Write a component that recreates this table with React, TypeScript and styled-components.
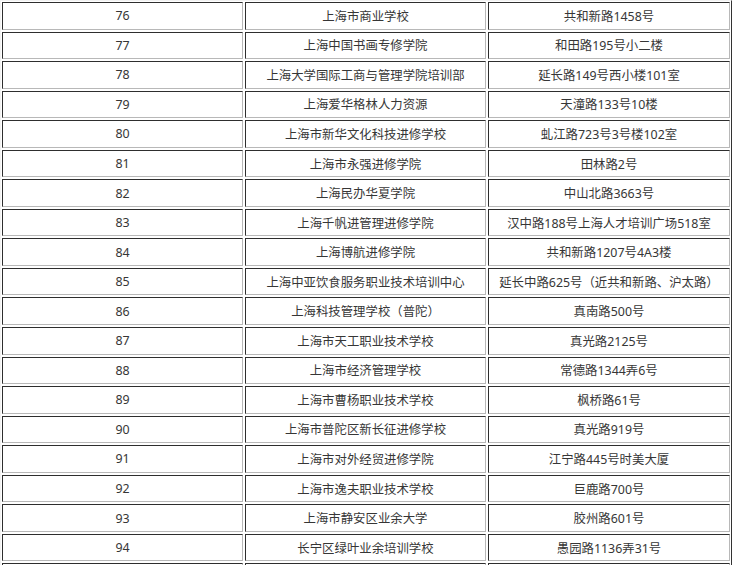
import React from "react";
import styled, { createGlobalStyle } from "styled-components";

const Global = createGlobalStyle`
  html, body { margin: 0; padding: 0; background: #fff; }
  body { font-family: "Noto Sans", "Noto Sans CJK SC", sans-serif; }
`;

const Table = styled.div`
  display: grid;
  grid-template-columns: 241px 241px 242px;
  grid-auto-rows: 27.56px;
  gap: 2px;
  padding: 1px;
  width: max-content;
  border-style: solid;
  border-width: 1px;
  border-color: #f2f2f2 #333 #333 #f2f2f2;
  background: #fff;
`;

const Cell = styled.div`
  box-sizing: border-box;
  display: flex;
  align-items: center;
  justify-content: center;
  border-style: solid;
  border-width: 1px;
  border-color: #2e2e2e #b8b8b8 #b8b8b8 #2e2e2e;
  font-family: "Noto Sans", "Noto Sans CJK SC", sans-serif;
  font-size: 12.4px;
  color: #363636;
  white-space: nowrap;
  overflow: hidden;
`;

const rows: [string, string, string][] = [
  ["76", "上海市商业学校", "共和新路1458号"],
  ["77", "上海中国书画专修学院", "和田路195号小二楼"],
  ["78", "上海大学国际工商与管理学院培训部", "延长路149号西小楼101室"],
  ["79", "上海爱华格林人力资源", "天潼路133号10楼"],
  ["80", "上海市新华文化科技进修学校", "虬江路723号3号楼102室"],
  ["81", "上海市永强进修学院", "田林路2号"],
  ["82", "上海民办华夏学院", "中山北路3663号"],
  ["83", "上海千帆进管理进修学院", "汉中路188号上海人才培训广场518室"],
  ["84", "上海博航进修学院", "共和新路1207号4A3楼"],
  ["85", "上海中亚饮食服务职业技术培训中心", "延长中路625号（近共和新路、沪太路）"],
  ["86", "上海科技管理学校（普陀）", "真南路500号"],
  ["87", "上海市天工职业技术学校", "真光路2125号"],
  ["88", "上海市经济管理学校", "常德路1344弄6号"],
  ["89", "上海市曹杨职业技术学校", "枫桥路61号"],
  ["90", "上海市普陀区新长征进修学校", "真光路919号"],
  ["91", "上海市对外经贸进修学院", "江宁路445号时美大厦"],
  ["92", "上海市逸夫职业技术学校", "巨鹿路700号"],
  ["93", "上海市静安区业余大学", "胶州路601号"],
  ["94", "长宁区绿叶业余培训学校", "愚园路1136弄31号"],
];

export default function App() {
  return (
    <>
      <Global />
      <Table>
        {rows.map((r) => (
          <React.Fragment key={r[0]}>
            <Cell>{r[0]}</Cell>
            <Cell>{r[1]}</Cell>
            <Cell>{r[2]}</Cell>
          </React.Fragment>
        ))}
        <Cell />
        <Cell />
        <Cell />
      </Table>
    </>
  );
}
